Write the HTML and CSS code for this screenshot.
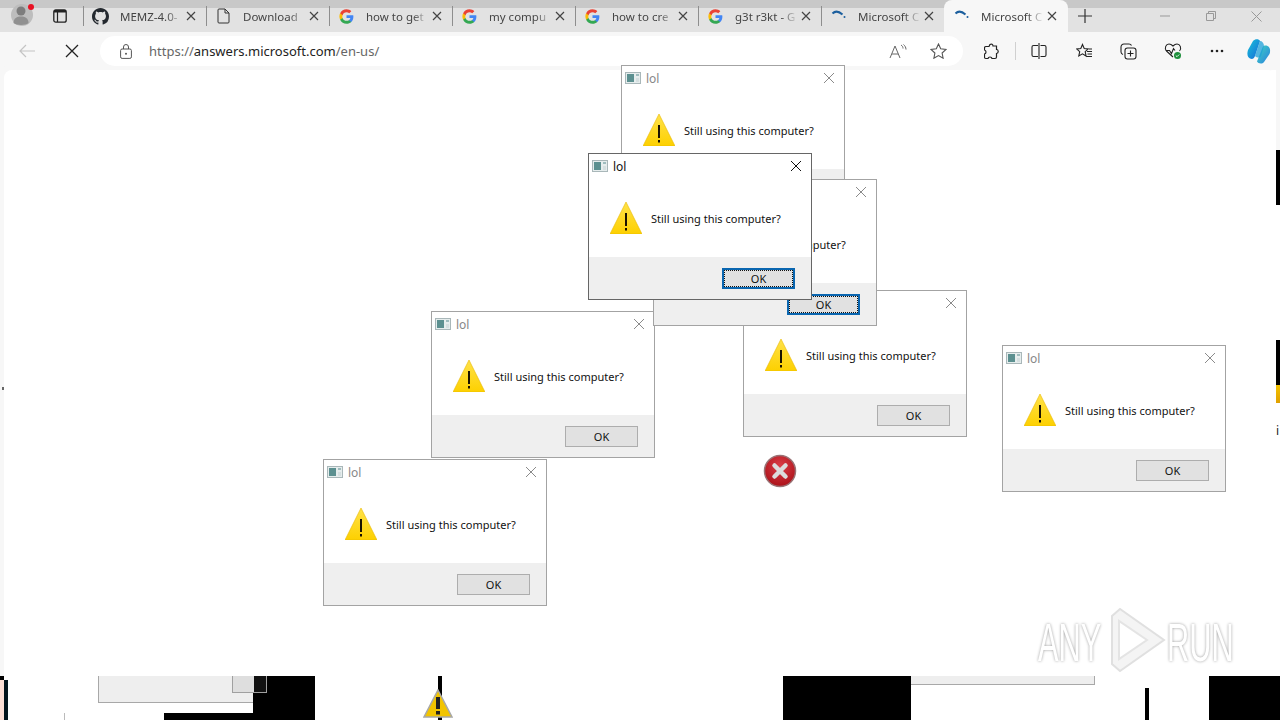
FILE: index.html
```html
<!DOCTYPE html>
<html lang="en">
<head>
  <meta charset="UTF-8">
  <meta name="viewport" content="width=device-width, initial-scale=1.0">
  <title>Microsoft Community</title>
  <link rel="stylesheet" href="styles.css">
</head>
<body>
  <svg class="defs" width="0" height="0">
    <defs>
      <linearGradient id="warnFill" x1="0" y1="0" x2="0" y2="1">
        <stop offset="0" stop-color="#ffe24a"/>
        <stop offset="1" stop-color="#fdd000"/>
      </linearGradient>
      <symbol id="google" viewBox="0 0 24 24">
        <path fill="#4285f4" d="M23 12.300c0-.8-.1-1.600-.2-2.300H12v4.400h6.200c-.3 1.400-1.100 2.600-2.300 3.400v2.800h3.700c2.200-2 3.400-5 3.400-8.300z"/>
        <path fill="#34a853" d="M12 23.500c3.100 0 5.700-1 7.600-2.800l-3.700-2.900c-1 .7-2.300 1.100-3.900 1.100-3 0-5.500-2-6.400-4.700H1.800v2.900c1.900 3.800 5.800 6.400 10.200 6.400z"/>
        <path fill="#fbbc05" d="M5.600 14.200c-.5-1.400-.5-3 0-4.400V6.900H1.800c-1.600 3.200-1.600 7 0 10.200z"/>
        <path fill="#ea4335" d="M12 5.100c1.700 0 3.200.6 4.400 1.700l3.300-3.300C17.700 1.600 15.100.5 12 .5 7.600.5 3.700 3.100 1.800 6.900l3.800 2.900C6.500 7.100 9 5.100 12 5.100z"/>
      </symbol>
      <symbol id="tabClose" viewBox="0 0 10 10">
        <path d="M1 1l8 8M9 1l-8 8" fill="none" stroke="#444" stroke-width="1.200"/>
      </symbol>
      <symbol id="spinner" viewBox="0 0 16 16">
        <path d="M2 5.500C5 2.500 8 3 12 6.500" fill="none" stroke="#1c5f9e" stroke-width="2"/>
        <circle cx="14" cy="9" r="1" fill="#1c5f9e"/>
      </symbol>
      <symbol id="appIcon" viewBox="0 0 16 12">
        <rect x=".5" y=".5" width="15" height="11" fill="#e6eded" stroke="#a9b7b9"/>
        <rect x="2" y="2" width="7" height="8" fill="#5c9090"/>
        <rect x="11" y="2" width="3" height="2" fill="#9fbcbe"/>
        <rect x="11" y="6" width="3" height="4" fill="#d5dfe0"/>
      </symbol>
      <symbol id="dlgClose" viewBox="0 0 12 12">
        <path d="M1 1l10 10M11 1L1 11" fill="none" stroke="currentColor" stroke-width="1"/>
      </symbol>
      <symbol id="warn" viewBox="0 0 32 32">
        <path d="M16 0L32 32H0z" fill="url(#warnFill)"/>
        <path d="M16 0L32 32H0z" fill="none" stroke="#e8b800" stroke-width=".6"/>
        <rect x="15" y="11" width="2" height="13" fill="#1a1200"/>
        <rect x="15" y="26" width="2" height="2.500" fill="#1a1200"/>
      </symbol>
    </defs>
  </svg>

  <div class="strip">
    <div class="strip-left">
      <div class="avatar">
        <svg width="24" height="26" viewBox="0 0 24 26">
          <circle cx="12" cy="13" r="11" fill="#bdbdbd"/>
          <circle cx="11" cy="9" r="4.500" fill="#7d7d7d"/>
          <path d="M3.500 21c0-5 3.500-6.500 7.500-6.500s7.500 1.500 7.500 6.500c-2 2.500-13 2.500-15 0z" fill="#909090"/>
          <circle cx="21" cy="5" r="3" fill="#e81123"/>
        </svg>
      </div>
      <svg class="tab-actions" width="14" height="14" viewBox="0 0 14 14">
        <rect x=".8" y=".8" width="12.400" height="12.400" rx="2" fill="none" stroke="#222" stroke-width="1.300"/>
        <rect x="1" y="1" width="12" height="2.500" fill="#222"/>
        <path d="M4.500 3v10" stroke="#222" stroke-width="1.200"/>
      </svg>
    </div>

    <div class="tab">
      <svg class="fav" width="17" height="17" viewBox="0 0 16 16"><path fill="#24292f" d="M8 0C3.580 0 0 3.580 0 8c0 3.540 2.290 6.530 5.470 7.590.4.070.55-.17.55-.38 0-.19-.01-.82-.01-1.490-2.010.37-2.530-.49-2.690-.94-.09-.23-.48-.94-.82-1.130-.28-.15-.68-.52-.01-.53.630-.01 1.080.58 1.230.82.720 1.210 1.870.87 2.330.66.070-.52.280-.87.510-1.070-1.780-.2-3.640-.89-3.640-3.950 0-.87.310-1.590.82-2.150-.08-.2-.36-1.020.08-2.120 0 0 .67-.21 2.200.82.640-.18 1.320-.27 2-.27s1.360.09 2 .27c1.530-1.040 2.200-.82 2.200-.82.440 1.100.16 1.920.08 2.120.51.560.82 1.270.82 2.150 0 3.070-1.870 3.750-3.650 3.950.290.250.540.730.540 1.480 0 1.070-.01 1.930-.01 2.200 0 .21.150.46.550.38A8.010 8.010 0 0 0 16 8c0-4.420-3.580-8-8-8z"/></svg>
      <span class="tab-title">MEMZ-4.0-</span>
      <svg class="x" width="10" height="10"><use href="#tabClose"/></svg>
    </div>
    <div class="tab">
      <svg class="fav" width="14" height="16" viewBox="0 0 14 16"><path d="M2.500 1h6l4 4v9a1 1 0 0 1-1 1h-9a1 1 0 0 1-1-1V2a1 1 0 0 1 1-1zM8.500 1v4h4" fill="none" stroke="#333" stroke-width="1"/></svg>
      <span class="tab-title">Download</span>
      <svg class="x" width="10" height="10"><use href="#tabClose"/></svg>
    </div>
    <div class="tab">
      <svg class="fav" width="15" height="15"><use href="#google"/></svg>
      <span class="tab-title">how to get</span>
      <svg class="x" width="10" height="10"><use href="#tabClose"/></svg>
    </div>
    <div class="tab">
      <svg class="fav" width="15" height="15"><use href="#google"/></svg>
      <span class="tab-title">my compu</span>
      <svg class="x" width="10" height="10"><use href="#tabClose"/></svg>
    </div>
    <div class="tab">
      <svg class="fav" width="15" height="15"><use href="#google"/></svg>
      <span class="tab-title">how to cre</span>
      <svg class="x" width="10" height="10"><use href="#tabClose"/></svg>
    </div>
    <div class="tab">
      <svg class="fav" width="15" height="15"><use href="#google"/></svg>
      <span class="tab-title">g3t r3kt - G</span>
      <svg class="x" width="10" height="10"><use href="#tabClose"/></svg>
    </div>
    <div class="tab">
      <svg class="fav spin" width="16" height="16"><use href="#spinner"/></svg>
      <span class="tab-title">Microsoft C</span>
      <svg class="x" width="10" height="10"><use href="#tabClose"/></svg>
    </div>
    <div class="tab tab-active">
      <svg class="fav spin" width="16" height="16"><use href="#spinner"/></svg>
      <span class="tab-title">Microsoft C</span>
      <svg class="x" width="10" height="10"><use href="#tabClose"/></svg>
    </div>

    <svg class="new-tab" width="14" height="14" viewBox="0 0 14 14"><path d="M7 0v14M0 7h14" stroke="#333" stroke-width="1.200"/></svg>

    <div class="win-controls">
      <svg width="10" height="10" viewBox="0 0 10 10"><path d="M0 5h10" stroke="#999" stroke-width="1"/></svg>
      <svg width="10" height="10" viewBox="0 0 10 10"><path d="M.5 2.500h7v7h-7zM2.500 2.500v-2h7v7h-2" fill="none" stroke="#999" stroke-width="1"/></svg>
      <svg width="11" height="11" viewBox="0 0 11 11"><path d="M.5.500l10 10M10.500.500l-10 10" stroke="#999" stroke-width="1"/></svg>
    </div>
  </div>

  <div class="toolbar">
    <svg class="back" width="16" height="14" viewBox="0 0 16 14"><path d="M1 7h15M7 1L1 7l6 6" fill="none" stroke="#c4c4c4" stroke-width="1.200"/></svg>
    <svg class="stop" width="14" height="14" viewBox="0 0 14 14"><path d="M1 1l12 12M13 1L1 13" stroke="#222" stroke-width="1.300"/></svg>

    <div class="address">
      <svg class="lock" width="12" height="15" viewBox="0 0 12 15">
        <rect x=".6" y="5" width="10.800" height="9.400" rx="1.500" fill="none" stroke="#555"/>
        <path d="M3.500 5V3a2.500 2.500 0 0 1 5 0v2" fill="none" stroke="#555"/>
        <circle cx="6" cy="9.700" r="1" fill="#555"/>
      </svg>
      <span class="url"><span class="url-dim">https://</span>answers.microsoft.com<span class="url-dim">/en-us/</span></span>
      <svg class="read" width="18" height="15" viewBox="0 0 18 15">
        <path d="M1 14L6 2l5 12M2.800 10h6.400" fill="none" stroke="#666" stroke-width="1"/>
        <path d="M12 1c1.500 1 2 2 2 3.500M14.500.500c1.500 1.300 2.500 3 2.500 5" fill="none" stroke="#666" stroke-width="1"/>
      </svg>
      <svg class="star" width="17" height="16" viewBox="0 0 17 16"><path d="M8.500 1l2.200 4.800 5.300.6-3.900 3.600 1 5.200-4.600-2.600-4.600 2.600 1-5.200L1 6.400l5.300-.6z" fill="none" stroke="#555" stroke-width="1.100"/></svg>
    </div>

    <div class="tools">
      <svg class="tool t-ext" width="16" height="17" viewBox="0 0 16 17"><path d="M6 1.500c1.500-1 3 0 3 1.500h3.500v3.500c2 0 2.500 3.500 0 4v3.500c0 1-1 1.500-1.500 1.500H8c-.5-2-3.500-2-4 0H2c-1 0-1.500-.5-1.500-1.500v-3c2-.5 2-3.500 0-4V5c0-1 .5-1.500 1.500-1.500h3z" fill="none" stroke="#222" stroke-width="1.200"/></svg>
      <span class="tool-sep"></span>
      <svg class="tool t-split" width="16" height="16" viewBox="0 0 16 16"><path d="M7 2.500H2.500a1.500 1.500 0 0 0-1.500 1.500v8a1.500 1.500 0 0 0 1.500 1.500H7M9.500 2.500h4a1.500 1.500 0 0 1 1.500 1.500v8a1.500 1.500 0 0 1-1.500 1.500h-4M8 0v16" fill="none" stroke="#222" stroke-width="1.100"/></svg>
      <svg class="tool t-fav" width="17" height="16" viewBox="0 0 17 16"><path d="M6.500 1.500l1.700 4 4 .4-3 2.800.9 4.300-3.600-2.200-3.700 2.200.9-4.300-3-2.800 4.100-.4zM11 8.500h5M11.500 11h4.500M10.500 13.500h5.500M13 6h3" fill="none" stroke="#222" stroke-width="1.100"/></svg>
      <svg class="tool t-coll" width="17" height="17" viewBox="0 0 17 17"><path d="M3 11.500C1.500 11 1 10 1 9V4c0-1.800 1.200-3 3-3h5c1 0 2 .5 2.500 1.500" fill="none" stroke="#222" stroke-width="1.100"/><rect x="5" y="5" width="11" height="11" rx="2.500" fill="none" stroke="#222" stroke-width="1.100"/><path d="M10.500 7.500v6M7.500 10.500h6" stroke="#222" stroke-width="1.100"/></svg>
      <svg class="tool t-health" width="18" height="17" viewBox="0 0 18 17"><path d="M9 14L2.500 8C0 5 2 1 5 1c2 0 3 1 4 2 1-1 2-2 4-2 3 0 5 4 2.500 7M1.500 7.500h4l2 3 2-5 1.500 2" fill="none" stroke="#222" stroke-width="1.100"/><circle cx="13.500" cy="12.500" r="3.500" fill="#1e8f3c"/><path d="M11.800 12.500l1.200 1.200 2.200-2.200" fill="none" stroke="#fff" stroke-width=".9"/></svg>
      <svg class="tool t-more" width="14" height="4" viewBox="0 0 14 4"><circle cx="2" cy="2" r="1.300" fill="#222"/><circle cx="7" cy="2" r="1.300" fill="#222"/><circle cx="12" cy="2" r="1.300" fill="#222"/></svg>
      <svg class="tool t-copilot" width="24" height="26" viewBox="0 0 24 26">
        <defs>
          <linearGradient id="copA" x1="0" y1="0" x2="1" y2="1"><stop offset="0" stop-color="#19c5d8"/><stop offset="1" stop-color="#1667d9"/></linearGradient>
          <linearGradient id="copB" x1="0" y1="0" x2="1" y2="1"><stop offset="0" stop-color="#3fd5c0"/><stop offset="1" stop-color="#2a7fe0"/></linearGradient>
        </defs>
        <path d="M6 3c2-2.500 6-2.500 7 0l-5 15c-1 3-3 3.500-5 2.500C0 19 0 15 1 12z" fill="url(#copA)"/>
        <path d="M17 24c-2 2.500-6 1.500-7-.5l5.500-14c.8-2 3-2.500 5-1.500 3 1.500 3 5 2 8z" fill="url(#copB)"/>
        <path d="M8 18l5-15c2 0 4 2 4 5l-3 10c-1 2-4 2-6 0z" fill="#1ea0d8" opacity=".75"/>
      </svg>
    </div>
  </div>

  <div class="viewport"></div>

  <!-- leftover screen pieces along the edges -->
  <div class="gl gl-edge-top"></div>
  <div class="gl gl-edge-low"></div>
  <div class="gl gl-right-a"></div>
  <div class="gl gl-right-b"></div>
  <div class="gl gl-right-c"></div>
  <span class="gl gl-i">i</span>
  <div class="gl gl-mark"></div>
  <div class="gl gl-corner"></div>
  <div class="gl gl-left-pink"></div>
  <div class="gl gl-left-dark"></div>
  <div class="gl gl-old-dlg"></div>
  <div class="gl gl-old-line"></div>
  <div class="gl gl-black-a"></div>
  <div class="gl gl-black-low"></div>
  <div class="gl gl-old-btn"></div>
  <div class="gl gl-stick"></div>
  <div class="gl gl-black-b"></div>
  <div class="gl gl-old-bar"></div>
  <div class="gl gl-stick-b"></div>
  <div class="gl gl-black-c"></div>

  <svg class="gl warn-low" width="30" height="29" viewBox="0 0 30 29">
    <path d="M15 1l14 27H1z" fill="#f2c400" stroke="#a8a8a8" stroke-width="1.500"/>
    <rect x="13" y="8" width="4" height="12" fill="#222"/>
    <rect x="13" y="22" width="4" height="3.500" fill="#222"/>
  </svg>

  <svg class="gl error-icon" width="34" height="34" viewBox="0 0 34 34">
    <defs>
      <radialGradient id="errFill" cx=".5" cy=".35" r=".7"><stop offset="0" stop-color="#dc3f48"/><stop offset="1" stop-color="#a80e16"/></radialGradient>
    </defs>
    <circle cx="17" cy="17" r="15.500" fill="url(#errFill)" stroke="#9a7275" stroke-width="1.500"/>
    <path d="M11.500 11.500l11 11M22.500 11.500l-11 11" stroke="#dcdcdc" stroke-width="4.500" stroke-linecap="round"/>
  </svg>

  <div class="gl watermark">
    <span class="wm-text wm-any">ANY</span>
    <svg class="wm-logo" width="60" height="68" viewBox="0 0 60 68">
      <path d="M6 10l8-7 44 31-44 31-8-7z" fill="#f4f4f4" stroke="#e0e0e0" stroke-width="2"/>
      <path d="M13 15v38l28-19z" fill="#ffffff" stroke="#e4e4e4" stroke-width="2"/>
    </svg>
    <span class="wm-text wm-run">RUN</span>
  </div>

  <div class="dlg dlg-a">
    <div class="dlg-title"><svg width="16" height="12"><use href="#appIcon"/></svg><span>lol</span><svg class="dlg-x" width="12" height="12"><use href="#dlgClose"/></svg></div>
    <div class="dlg-body"><svg width="32" height="32"><use href="#warn"/></svg><span>Still using this computer?</span></div>
    <div class="dlg-foot"><button class="ok">OK</button></div>
  </div>
  <div class="dlg dlg-c">
    <div class="dlg-title"><svg width="16" height="12"><use href="#appIcon"/></svg><span>lol</span><svg class="dlg-x" width="12" height="12"><use href="#dlgClose"/></svg></div>
    <div class="dlg-body"><svg width="32" height="32"><use href="#warn"/></svg><span>Still using this computer?</span></div>
    <div class="dlg-foot"><button class="ok">OK</button></div>
  </div>
  <div class="dlg dlg-d">
    <div class="dlg-title"><svg width="16" height="12"><use href="#appIcon"/></svg><span>lol</span><svg class="dlg-x" width="12" height="12"><use href="#dlgClose"/></svg></div>
    <div class="dlg-body"><svg width="32" height="32"><use href="#warn"/></svg><span>Still using this computer?</span></div>
    <div class="dlg-foot"><button class="ok">OK</button></div>
  </div>
  <div class="dlg dlg-e">
    <div class="dlg-title"><svg width="16" height="12"><use href="#appIcon"/></svg><span>lol</span><svg class="dlg-x" width="12" height="12"><use href="#dlgClose"/></svg></div>
    <div class="dlg-body"><svg width="32" height="32"><use href="#warn"/></svg><span>Still using this computer?</span></div>
    <div class="dlg-foot"><button class="ok">OK</button></div>
  </div>
  <div class="dlg dlg-f">
    <div class="dlg-title"><svg width="16" height="12"><use href="#appIcon"/></svg><span>lol</span><svg class="dlg-x" width="12" height="12"><use href="#dlgClose"/></svg></div>
    <div class="dlg-body"><svg width="32" height="32"><use href="#warn"/></svg><span>Still using this computer?</span></div>
    <div class="dlg-foot"><button class="ok">OK</button></div>
  </div>
  <div class="dlg dlg-b">
    <div class="dlg-title"><svg width="16" height="12"><use href="#appIcon"/></svg><span>lol</span><svg class="dlg-x" width="12" height="12"><use href="#dlgClose"/></svg></div>
    <div class="dlg-body"><svg width="32" height="32"><use href="#warn"/></svg><span>Still using this computer?</span></div>
    <div class="dlg-foot"><button class="ok ok-focus">OK</button></div>
  </div>
  <div class="dlg dlg-active dlg-g">
    <div class="dlg-title"><svg width="16" height="12"><use href="#appIcon"/></svg><span>lol</span><svg class="dlg-x" width="12" height="12"><use href="#dlgClose"/></svg></div>
    <div class="dlg-body"><svg width="32" height="32"><use href="#warn"/></svg><span>Still using this computer?</span></div>
    <div class="dlg-foot"><button class="ok ok-focus">OK</button></div>
  </div>
</body>
</html>
```

FILE: styles.css
```css
/* General Styles */
body {
  margin: 0;
  width: 1280px;
  height: 720px;
  overflow: hidden;
  position: relative;
  background-color: #ffffff;
  font-family: "Noto Sans", Arial, sans-serif;
  color: #333333;
  display: flex;
  flex-direction: column;
}

.defs {
  position: absolute;
}

/* Tab strip */
.strip {
  height: 24px;
  padding-top: 8px;
  display: flex;
  align-items: flex-start;
  flex-shrink: 0;
  background: linear-gradient(#c8c8c8 8px, #e2e2e2 8px);
}

.strip-left {
  width: 83px;
  height: 20px;
  margin-top: -2px;
  display: flex;
  align-items: center;
  flex-shrink: 0;
}

.avatar {
  width: 24px;
  height: 26px;
  margin: -2px 0 0 10px;
}

.tab-actions {
  margin-left: 19px;
}

.tab {
  width: 123px;
  height: 20px;
  margin-top: -2px;
  box-sizing: border-box;
  flex-shrink: 0;
  display: flex;
  align-items: center;
  border-left: 1px solid #8e8e8e;
  font-size: 11.5px;
}

.tab .fav {
  width: 17px;
  margin-left: 8px;
  flex-shrink: 0;
}

.tab-title {
  width: 66px;
  margin-left: 11px;
  white-space: nowrap;
  overflow: hidden;
  color: #444444;
  -webkit-mask-image: linear-gradient(90deg, #000 70%, transparent 95%);
  mask-image: linear-gradient(90deg, #000 70%, transparent 95%);
}

.tab .x {
  flex-shrink: 0;
}

.tab-active {
  width: 124px;
  height: 32px;
  margin-top: -8px;
  padding-left: 1px;
  border-left: none;
  border-radius: 8px 8px 0 0;
  background-color: #f7f7f7;
}

.new-tab {
  margin: 1px 0 0 10px;
  flex-shrink: 0;
}

.win-controls {
  width: 102px;
  height: 16px;
  margin-left: 68px;
  display: flex;
  justify-content: space-between;
  align-items: center;
  flex-shrink: 0;
}

/* Toolbar */
.toolbar {
  height: 38px;
  flex-shrink: 0;
  display: flex;
  align-items: center;
  background-color: #f7f7f7;
}

.back {
  margin-left: 19px;
}

.stop {
  margin-left: 30px;
}

.address {
  width: 863px;
  height: 30px;
  margin-left: 21px;
  box-sizing: border-box;
  border-radius: 15px;
  background-color: #ffffff;
  display: flex;
  align-items: center;
}

.lock {
  margin-left: 20px;
}

.url {
  margin-left: 17px;
  font-size: 13px;
  color: #222222;
  flex: 1;
}

.url-dim {
  color: #666666;
}

.star {
  margin: 0 16px 0 23px;
}

.tools {
  position: relative;
  flex: 1;
  height: 30px;
  display: flex;
  align-items: center;
}

.tool {
  flex-shrink: 0;
}

.t-ext {
  margin-left: 21px;
}

.tool-sep {
  width: 1px;
  height: 18px;
  margin-left: 15px;
  background-color: #d0d0d0;
}

.t-split {
  margin-left: 15px;
}

.t-fav {
  margin-left: 29px;
}

.t-coll {
  margin-left: 27px;
}

.t-health {
  margin-left: 27px;
}

.t-more {
  margin-left: 28px;
}

.t-copilot {
  margin-left: 23px;
}

/* Page area */
.viewport {
  flex: 1;
  margin-left: 4px;
  margin-right: 4px;
  background-color: #ffffff;
  border-radius: 8px 8px 0 0;
  box-shadow: -4px -4px 0 0 #f7f7f7;
}

/* Glitched screen pieces */
.gl {
  position: absolute;
}

.gl-edge-top {
  left: 1276px;
  top: 70px;
  width: 4px;
  height: 80px;
  background-color: #f7f7f7;
}

.gl-edge-low {
  left: 0;
  top: 70px;
  width: 4px;
  height: 606px;
  background-color: #f7f7f7;
}

.gl-right-a {
  left: 1276px;
  top: 150px;
  width: 4px;
  height: 55px;
  background-color: #000000;
}

.gl-right-b {
  left: 1276px;
  top: 340px;
  width: 4px;
  height: 45px;
  background-color: #000000;
}

.gl-right-c {
  left: 1276px;
  top: 385px;
  width: 4px;
  height: 18px;
  background: linear-gradient(#f4c400, #e0a000);
}

.gl-i {
  left: 1276px;
  top: 422px;
  font-size: 12px;
  color: #222222;
}

.gl-mark {
  left: 2px;
  top: 387px;
  width: 2px;
  height: 3px;
  background-color: #666666;
}

.gl-corner {
  left: 0;
  top: 676px;
  width: 4px;
  height: 4px;
  background-color: #000000;
}

.gl-left-pink {
  left: 0;
  top: 680px;
  width: 4px;
  height: 40px;
  background-color: #fde0d6;
}

.gl-left-dark {
  left: 4px;
  top: 680px;
  width: 4px;
  height: 40px;
  background-color: #04141c;
}

.gl-old-dlg {
  left: 98px;
  top: 676px;
  width: 155px;
  height: 27px;
  box-sizing: border-box;
  background-color: #eeeeee;
  border: 1px solid #a8a8a8;
  border-top: none;
  border-right: none;
}

.gl-old-line {
  left: 64px;
  top: 713px;
  width: 1px;
  height: 7px;
  background-color: #bbbbbb;
}

.gl-black-a {
  left: 253px;
  top: 676px;
  width: 62px;
  height: 44px;
  background-color: #000000;
}

.gl-black-low {
  left: 164px;
  top: 713px;
  width: 89px;
  height: 7px;
  background-color: #000000;
}

.gl-old-btn {
  left: 232px;
  top: 676px;
  width: 35px;
  height: 17px;
  box-sizing: border-box;
  background: linear-gradient(90deg, #dedede 21px, #111111 21px);
  border: 1px solid #a0a0a0;
  border-top: none;
}

.gl-stick {
  left: 438px;
  top: 676px;
  width: 4px;
  height: 44px;
  background-color: #000000;
}

.warn-low {
  left: 423px;
  top: 689px;
}

.gl-black-b {
  left: 783px;
  top: 676px;
  width: 128px;
  height: 44px;
  background-color: #000000;
}

.gl-old-bar {
  left: 911px;
  top: 676px;
  width: 184px;
  height: 9px;
  box-sizing: border-box;
  background-color: #eeeeee;
  border: 1px solid #a8a8a8;
  border-top: none;
  border-left: none;
}

.gl-stick-b {
  left: 1145px;
  top: 688px;
  width: 4px;
  height: 32px;
  background-color: #000000;
}

.gl-black-c {
  left: 1209px;
  top: 676px;
  width: 71px;
  height: 44px;
  background-color: #000000;
}

.error-icon {
  left: 763px;
  top: 454px;
}

/* ANY.RUN watermark */
.watermark {
  left: 1036px;
  top: 606px;
  width: 200px;
  height: 68px;
}

.wm-text {
  position: absolute;
  top: 7px;
  font-family: "Liberation Sans", Arial, sans-serif;
  font-size: 53px;
  line-height: 60px;
  color: #ffffff;
  text-shadow: 0 0 4px rgba(0, 0, 0, .4);
  transform: scaleX(.58);
  transform-origin: left top;
}

.wm-any {
  left: 2px;
}

.wm-logo {
  position: absolute;
  left: 70px;
  top: 0;
}

.wm-run {
  left: 131px;
}

/* Dialogs */
.dlg {
  position: absolute;
  width: 224px;
  height: 147px;
  box-sizing: border-box;
  display: flex;
  flex-direction: column;
  border: 1px solid #a3a3a3;
  background-color: #ffffff;
  font-family: "Noto Sans", Arial, sans-serif;
  font-size: 11px;
  color: #111111;
}

.dlg-active {
  border-color: #666666;
}

.dlg-a { left: 621px; top: 65px; }
.dlg-b { left: 653px; top: 179px; }
.dlg-c { left: 743px; top: 290px; }
.dlg-d { left: 431px; top: 311px; }
.dlg-e { left: 323px; top: 459px; }
.dlg-f { left: 1002px; top: 345px; }
.dlg-g { left: 588px; top: 153px; }

.dlg-title {
  height: 24px;
  padding: 0 9px 0 3px;
  display: flex;
  align-items: center;
  color: #888888;
  font-size: 12px;
}

.dlg-active .dlg-title {
  color: #111111;
}

.dlg-title span {
  margin-left: 5px;
  flex: 1;
}

.dlg-x {
  color: #8a8a8a;
}

.dlg-active .dlg-x {
  color: #111111;
}

.dlg-body {
  flex: 1;
  padding-left: 21px;
  display: flex;
  align-items: center;
}

.dlg-body span {
  margin-left: 9px;
  padding-top: 2px;
}

.dlg-foot {
  height: 42px;
  box-sizing: border-box;
  padding: 11px 16px 0 0;
  display: flex;
  justify-content: flex-end;
  align-items: flex-start;
  background-color: #efefef;
}

.ok {
  width: 73px;
  height: 21px;
  padding: 0;
  box-sizing: border-box;
  border: 1px solid #adadad;
  background-color: #e1e1e1;
  font-family: "Noto Sans", Arial, sans-serif;
  font-size: 11px;
  color: #111111;
}

.ok-focus {
  border: 2px solid #0a66b0;
  outline: 1px dotted #111111;
  outline-offset: -3px;
}
```
